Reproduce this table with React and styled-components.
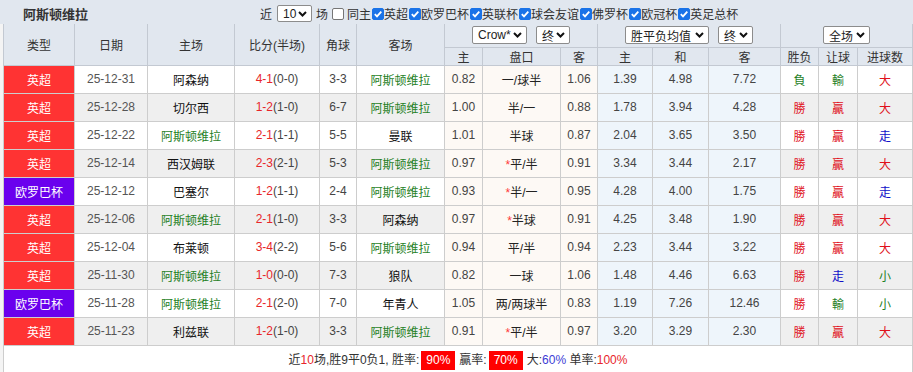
import React from 'react';
import styled, { createGlobalStyle } from 'styled-components';

const FONT = `"Liberation Sans", "Noto Sans CJK SC", sans-serif`;

const Global = createGlobalStyle`
  html, body { margin: 0; padding: 0; background: #f4f4f4; }
  body { font-family: ${FONT}; font-size: 12px; color: #333; }
`;

const Page = styled.div`
  width: 913px;
  overflow: hidden;
`;

const TopBar = styled.div`
  display: flex;
  align-items: center;
  box-sizing: border-box;
  height: 24px;
  padding-top: 3px;
  background: #e1e7ef;
`;

const Title = styled.div`
  box-sizing: border-box;
  width: 260px;
  padding-left: 23px;
  font-weight: bold;
  font-size: 13px;
  color: #333;
`;

const Controls = styled.div`
  display: flex;
  align-items: center;
  font-size: 12px;
  color: #333;
  white-space: nowrap;
`;

const Word = styled.span`
  margin: 0 ${p => p.$mr || 0}px 0 ${p => p.$ml || 0}px;
`;

const Box = styled.span`
  display: inline-flex;
  align-items: center;
  justify-content: center;
  box-sizing: border-box;
  width: 12px;
  height: 12px;
  margin: 0 ${p => (p.$on ? 0 : 3)}px 0 ${p => (p.$on ? 1 : 4)}px;
  border-radius: 2px;
  background: ${p => (p.$on ? '#1a73e8' : '#fff')};
  border: 1px solid ${p => (p.$on ? '#1a73e8' : '#767676')};
`;

const SelectBox = styled.span`
  display: inline-flex;
  align-items: center;
  justify-content: space-between;
  box-sizing: border-box;
  width: ${p => p.$w}px;
  height: ${p => p.$h || 18}px;
  padding: 0 4px 0 5px;
  border: 1px solid #8c8c8c;
  border-radius: 2px;
  background: #fff;
  font-size: 12px;
  color: #222;
`;

const Table = styled.table`
  border-collapse: collapse;
  table-layout: fixed;
  width: 910px;
  margin-left: 3px;
  font-size: 12px;
`;

const HeadRow = styled.tr`
  height: ${p => p.$h}px;
`;

const Th = styled.th`
  background: #e1e7ef;
  border: 1px solid #c3c9d2;
  border-top: none;
  font-weight: normal;
  color: #333;
  padding: 0;
  text-align: center;
  white-space: nowrap;
`;

const SelectGroup = styled.div`
  display: flex;
  justify-content: center;
  align-items: center;
  gap: 9px;
`;

const Row = styled.tr`
  height: 28px;
`;

const bgFor = (kind, even) => {
  if (kind === 'cream') return '#fdf9f5';
  if (kind === 'blue') return '#eef5fb';
  return even ? '#efefef' : '#ffffff';
};

const Td = styled.td`
  border: 1px solid #cdcdcd;
  padding: 0;
  text-align: center;
  white-space: nowrap;
  background: ${p => bgFor(p.$kind, p.$even)};
  color: ${p => p.$color || '#444'};
`;

const TypeTd = styled.td`
  border: 1px solid #cdcdcd;
  padding: 0;
  text-align: center;
  color: #fff;
  background: ${p => p.$bg};
`;

const Red = styled.span`
  color: ${p => p.$c || '#e8262a'};
`;

const FootTd = styled.td`
  height: 29px;
  border: 1px solid #cdcdcd;
  background: #fff;
  text-align: center;
  color: #333;
  padding: 0;
`;

const Badge = styled.span`
  display: inline-block;
  background: #ff0000;
  color: #fff;
  line-height: 19px;
  padding: 0 5px;
  margin: 0 4px 0 2px;
`;

const Chevron = () => (
  <svg width="9" height="6" viewBox="0 0 9 6">
    <path d="M1 1 L4.5 4.5 L8 1" fill="none" stroke="#111" strokeWidth="2" />
  </svg>
);

const Check = ({ on }) => (
  <Box $on={on}>
    {on && (
      <svg width="10" height="10" viewBox="0 0 10 10">
        <path d="M1.8 5.2 L4 7.4 L8.3 2.6" fill="none" stroke="#fff" strokeWidth="1.8" />
      </svg>
    )}
  </Box>
);

const Select = ({ w, h, children }) => (
  <SelectBox $w={w} $h={h}>
    <span>{children}</span>
    <Chevron />
  </SelectBox>
);

const GREEN = '#1f7f1f';
const TEAM = '阿斯顿维拉';

const rows = [
  ['英超', '25-12-31', '阿森纳', '4-1', '(0-0)', '3-3', TEAM, '0.82', '一/球半', false, '1.06', '1.39', '4.98', '7.72', '負', '輸', '大'],
  ['英超', '25-12-28', '切尔西', '1-2', '(1-0)', '6-7', TEAM, '1.00', '半/一', false, '0.88', '1.78', '3.94', '4.28', '勝', '贏', '大'],
  ['英超', '25-12-22', TEAM, '2-1', '(1-1)', '5-5', '曼联', '1.01', '半球', false, '0.87', '2.04', '3.65', '3.50', '勝', '贏', '走'],
  ['英超', '25-12-14', '西汉姆联', '2-3', '(2-1)', '5-3', TEAM, '0.97', '平/半', true, '0.91', '3.34', '3.44', '2.17', '勝', '贏', '大'],
  ['欧罗巴杯', '25-12-12', '巴塞尔', '1-2', '(1-1)', '2-4', TEAM, '0.93', '半/一', true, '0.95', '4.28', '4.00', '1.75', '勝', '贏', '走'],
  ['英超', '25-12-06', TEAM, '2-1', '(1-0)', '3-3', '阿森纳', '0.97', '半球', true, '0.91', '4.25', '3.48', '1.90', '勝', '贏', '大'],
  ['英超', '25-12-04', '布莱顿', '3-4', '(2-2)', '5-6', TEAM, '0.94', '平/半', false, '0.94', '2.23', '3.44', '3.22', '勝', '贏', '大'],
  ['英超', '25-11-30', TEAM, '1-0', '(0-0)', '7-3', '狼队', '0.82', '一球', false, '1.06', '1.48', '4.46', '6.63', '勝', '走', '小'],
  ['欧罗巴杯', '25-11-28', TEAM, '2-1', '(2-0)', '7-0', '年青人', '1.05', '两/两球半', false, '0.83', '1.19', '7.26', '12.46', '勝', '輸', '小'],
  ['英超', '25-11-23', '利兹联', '1-2', '(1-0)', '3-3', TEAM, '0.91', '平/半', true, '0.97', '3.20', '3.29', '2.30', '勝', '贏', '大'],
];

const resultColor = r => {
  if (r === '負' || r === '輸' || r === '小') return GREEN;
  if (r === '走') return '#1010c8';
  return '#e0101a';
};

const widths = [71, 73, 87, 85, 37, 88, 38, 78, 37, 55, 56, 72, 38, 39, 55];
const cups = ['英超', '欧罗巴杯', '英联杯', '球会友谊', '佛罗杯', '欧冠杯', '英足总杯'];

export default function App() {
  return (
    <Page>
      <Global />
      <TopBar>
        <Title>阿斯顿维拉</Title>
        <Controls>
          <Word $mr={5}>近</Word>
          <Select w={35} h={17}>10</Select>
          <Word $ml={4}>场</Word>
          <Check on={false} />
          <Word>同主</Word>
          {cups.map(c => (
            <React.Fragment key={c}>
              <Check on />
              <Word>{c}</Word>
            </React.Fragment>
          ))}
        </Controls>
      </TopBar>
      <Table>
        <colgroup>
          {widths.map((w, i) => (
            <col key={i} style={{ width: w }} />
          ))}
        </colgroup>
        <thead>
          <HeadRow $h={23}>
            <Th rowSpan={2}>类型</Th>
            <Th rowSpan={2}>日期</Th>
            <Th rowSpan={2}>主场</Th>
            <Th rowSpan={2}>比分(半场)</Th>
            <Th rowSpan={2}>角球</Th>
            <Th rowSpan={2}>客场</Th>
            <Th colSpan={3}>
              <SelectGroup>
                <Select w={55}>Crow*</Select>
                <Select w={34}>终</Select>
              </SelectGroup>
            </Th>
            <Th colSpan={3}>
              <SelectGroup>
                <Select w={84}>胜平负均值</Select>
                <Select w={35}>终</Select>
              </SelectGroup>
            </Th>
            <Th colSpan={3}>
              <SelectGroup>
                <Select w={47}>全场</Select>
              </SelectGroup>
            </Th>
          </HeadRow>
          <HeadRow $h={18}>
            <Th>主</Th>
            <Th>盘口</Th>
            <Th>客</Th>
            <Th>主</Th>
            <Th>和</Th>
            <Th>客</Th>
            <Th>胜负</Th>
            <Th>让球</Th>
            <Th>进球数</Th>
          </HeadRow>
        </thead>
        <tbody>
          {rows.map((r, i) => {
            const even = i % 2 === 1;
            const [type, date, home, ft, ht, corner, away, o1, line, star, o2, e1, e2, e3, wl, hc, ou] = r;
            return (
              <Row key={i}>
                <TypeTd $bg={type === '英超' ? '#ff3333' : '#6a00ee'}>{type}</TypeTd>
                <Td $even={even} $color="#555">{date}</Td>
                <Td $even={even} $color={home === TEAM ? GREEN : '#111'}>{home}</Td>
                <Td $even={even} $color="#444">
                  <Red>{ft}</Red>
                  {ht}
                </Td>
                <Td $even={even} $color="#444">{corner}</Td>
                <Td $even={even} $color={away === TEAM ? GREEN : '#111'}>{away}</Td>
                <Td $kind="cream">{o1}</Td>
                <Td $kind="cream" $color="#222">
                  {star && <Red $c="#ff3a3a">*</Red>}
                  {line}
                </Td>
                <Td $kind="cream">{o2}</Td>
                <Td $kind="blue">{e1}</Td>
                <Td $kind="blue">{e2}</Td>
                <Td $kind="blue">{e3}</Td>
                <Td $even={even} $color={resultColor(wl)}>{wl}</Td>
                <Td $even={even} $color={resultColor(hc)}>{hc}</Td>
                <Td $even={even} $color={resultColor(ou)}>{ou}</Td>
              </Row>
            );
          })}
          <tr>
            <FootTd colSpan={15}>
              近<Red>10</Red>场,胜9平0负1, 胜率:
              <Badge>90%</Badge>
              贏率:
              <Badge>70%</Badge>
              大:<Red $c="#3c3cd6">60%</Red> 单率:<Red>100%</Red>
            </FootTd>
          </tr>
        </tbody>
      </Table>
    </Page>
  );
}
